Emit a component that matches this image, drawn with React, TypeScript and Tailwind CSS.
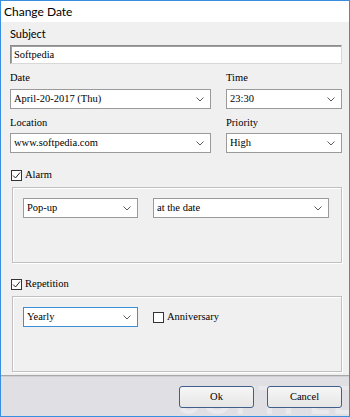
import React from "react";

const serif = { fontFamily: '"Liberation Serif", "Times New Roman", serif' };
const sans = { fontFamily: 'Lato, "Noto Sans", sans-serif' };

function Chevron() {
  return (
    <svg width="8" height="5" viewBox="0 0 8 5" className="shrink-0">
      <path d="M0.5 0.5 L4 4 L7.5 0.5" fill="none" stroke="#5a5a5a" strokeWidth="1" />
    </svg>
  );
}

function Select({ value, w, focused }: { value: string; w: string; focused?: boolean }) {
  return (
    <div
      className={`${w} h-[20px] bg-white border ${focused ? "border-[#3b8fd9]" : "border-[#9a9a9a]"} flex items-center pl-[3px] pr-[6px] text-[10.5px] text-black shrink-0`}
      style={serif}
    >
      <span className="flex-1 leading-none">{value}</span>
      <Chevron />
    </div>
  );
}

function Check({ checked }: { checked?: boolean }) {
  return (
    <div className="w-[11px] h-[11px] border border-[#333] bg-white flex items-center justify-center shrink-0">
      {checked && (
        <svg width="9" height="9" viewBox="0 0 9 9">
          <path d="M1 4.5 L3.5 7 L8 1.5" fill="none" stroke="#222" strokeWidth="1" />
        </svg>
      )}
    </div>
  );
}

export default function App() {
  return (
    <div className="w-[350px] h-[417px] border border-[#3a8ee0] flex flex-col overflow-hidden bg-[#f0f0f0] relative">
      <div className="h-[21px] bg-white flex items-center pl-[3px] text-[12px] text-black shrink-0" style={sans}>
        Change Date
      </div>
      <div className="flex-1 min-h-0 overflow-hidden pl-[9px] pr-[7px] text-black">
        <div className="pt-[5px] text-[11px] leading-[14px]" style={sans}>Subject</div>
        <div className="mt-[4px] h-[19px] bg-white border border-[#8c8c8c] border-b-[#d8d8d8] border-r-[#d8d8d8] shadow-[inset_1px_1px_0_#a0a0a0] flex items-center pl-[3px] text-[10.5px]" style={serif}>
          Softpedia
        </div>

        <div className="flex mt-[7px]">
          <div className="w-[216px] shrink-0">
            <div className="text-[10.5px] leading-[14px]" style={serif}>Date</div>
            <div className="mt-[4px]"><Select value="April-20-2017 (Thu)" w="w-[201px]" /></div>
            <div className="mt-[7px] text-[10.5px] leading-[14px]" style={serif}>Location</div>
            <div className="mt-[3px]"><Select value="www.softpedia.com" w="w-[201px]" /></div>
          </div>
          <div className="flex-1">
            <div className="text-[10.5px] leading-[14px]" style={serif}>Time</div>
            <div className="mt-[4px]"><Select value="23:30" w="w-full" /></div>
            <div className="mt-[7px] text-[10.5px] leading-[14px]" style={serif}>Priority</div>
            <div className="mt-[3px]"><Select value="High" w="w-full" /></div>
          </div>
        </div>

        <div className="mt-[15px] h-[14px] flex items-center gap-[3px] pl-[1px] text-[10.5px] leading-[14px]" style={serif}>
          <Check checked />
          <span>Alarm</span>
        </div>
        <div className="mt-[5px] ml-[2px] h-[76px] border border-[#c0c0c0] shadow-[inset_1px_1px_0_#fff,1px_1px_0_#fff] pl-[10px] pt-[10px] flex gap-[15px]">
          <Select value="Pop-up" w="w-[115px]" />
          <Select value="at the date" w="w-[176px]" />
        </div>

        <div className="mt-[14px] h-[14px] flex items-center gap-[3px] pl-[1px] text-[10.5px] leading-[14px]" style={serif}>
          <Check checked />
          <span>Repetition</span>
        </div>
        <div className="mt-[5px] ml-[2px] h-[76px] border border-[#c0c0c0] shadow-[inset_1px_1px_0_#fff,1px_1px_0_#fff] pl-[10px] pt-[10px] flex gap-[15px]">
          <Select value="Yearly" w="w-[115px]" focused />
          <div className="flex items-center h-[18px] mt-[1px] gap-[3px] text-[10.5px] leading-[12px]" style={serif}>
            <Check />
            <span>Anniversary</span>
          </div>
        </div>
      </div>
      <div className="h-[41px] shrink-0 bg-[#e0dfe4] border-t border-[#a8a8a8] shadow-[inset_0_1px_0_#cfcfd3] flex items-start pt-[10px] justify-end gap-[13px] pr-[7px] relative">
        <div className="absolute left-[178px] top-[4px] text-[38px] font-bold leading-none text-white/35 tracking-[2px] select-none" style={sans}>SOFTPEDIA</div>
        <button className="relative w-[75px] h-[22px] rounded-[3px] border border-[#3f5f8a] bg-gradient-to-b from-[#f6f6f6] to-[#e6e6e6] text-[10.5px] text-black" style={serif}>Ok</button>
        <button className="relative w-[75px] h-[22px] rounded-[3px] border border-[#3f5f8a] bg-gradient-to-b from-[#f6f6f6] to-[#e6e6e6] text-[10.5px] text-black" style={serif}>Cancel</button>
      </div>
    </div>
  );
}
